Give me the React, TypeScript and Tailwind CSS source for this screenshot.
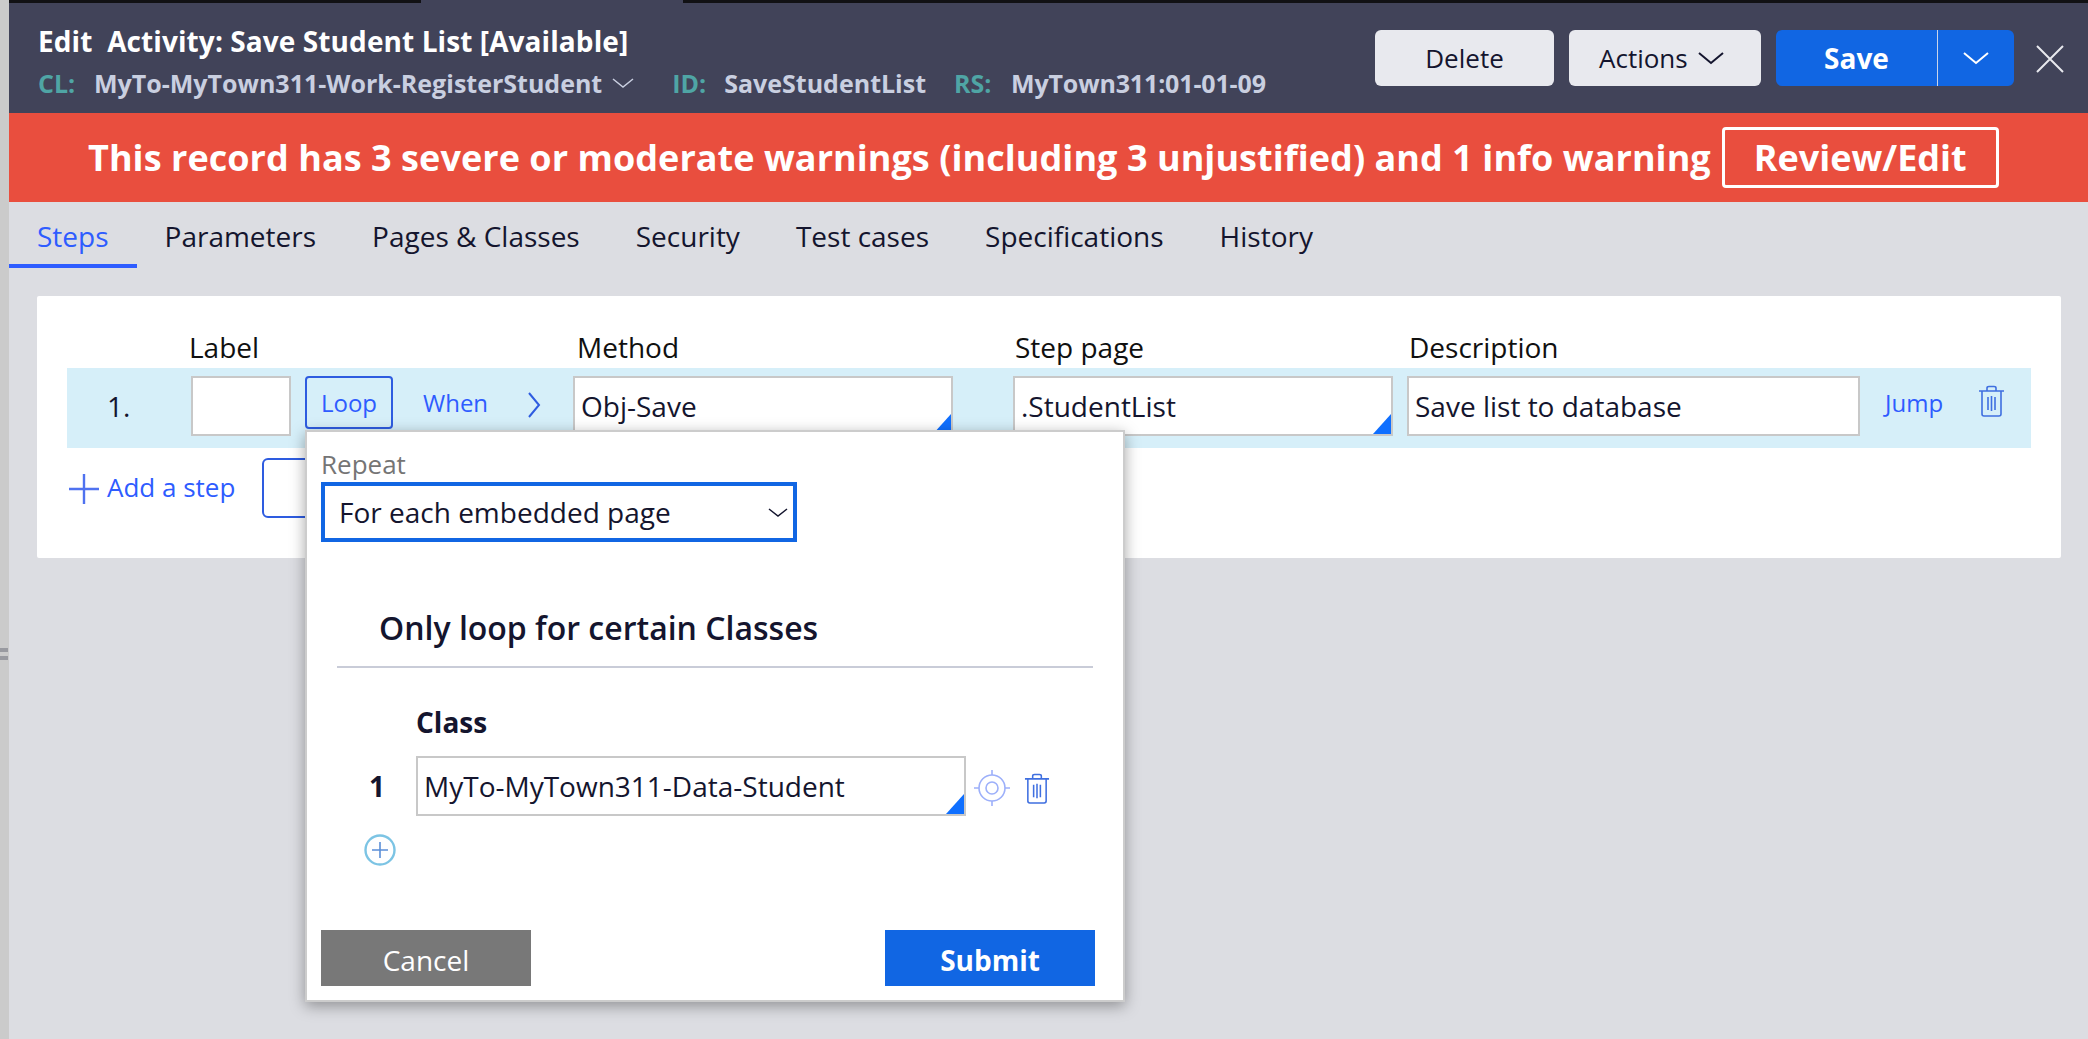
import React from "react";

const Chevron = ({ className, w = 24, h = 14, sw = 2 }: { className?: string; w?: number; h?: number; sw?: number }) => (
  <svg width={w} height={h} viewBox={`0 0 ${w} ${h}`} className={className} fill="none" stroke="currentColor" strokeWidth={sw}>
    <path d={`M1 2 L${w / 2} ${h - 2} L${w - 1} 2`} />
  </svg>
);

const Tri = () => (
  <svg width="18" height="20" viewBox="0 0 18 20" className="absolute right-0 bottom-0">
    <path d="M18 0 V20 H0 Z" fill="#0f6fff" />
  </svg>
);

const Trash = ({ w = 27, h = 32 }: { w?: number; h?: number }) => (
  <svg width={w} height={h} viewBox="0 0 27 32" fill="none" stroke="#3f6fe0" strokeWidth="1.6">
    <path d="M1 6 H26 M9 6 V3 Q9 1.5 11 1.5 H16 Q18 1.5 18 3 V6 M4 6 V29 Q4 31 6 31 H21 Q23 31 23 29 V6" />
    <path d="M10 12 V25 M13.5 11 V26 M17 12 V25" />
  </svg>
);

const Field = ({ className, children, tri = true }: { className?: string; children?: React.ReactNode; tri?: boolean }) => (
  <div className={`relative flex items-center h-[60px] border-2 border-[#c8c8c8] bg-white text-[#14152e] ${className ?? ""}`}>
    {children}
    {tri && <Tri />}
  </div>
);

export default function App() {
  const font = { fontFamily: '"Open Sans", "Noto Sans", sans-serif' };
  return (
    <div style={font} className="relative flex w-[2088px] h-[1039px] overflow-hidden bg-[#dcdde2] text-[#14152e]">
      <div className="w-[9px] shrink-0 bg-[#cbcbcb] flex flex-col gap-[4px] pt-[648px]">
        <div className="h-[4px] w-[8px] bg-[#999aa0]" />
        <div className="h-[4px] w-[8px] bg-[#999aa0]" />
      </div>
      <div className="flex-1 flex flex-col min-w-0">
        <div className="flex h-[3px] bg-[#111114]">
          <div className="w-[412px]" />
          <div className="w-[262px] bg-[#414359]" />
        </div>
        <header className="h-[110px] bg-[#414359] flex justify-between pl-[29px] pr-[24px]">
          <div className="flex flex-col pt-[21px]">
            <div className="text-[28px] leading-[34px] font-bold text-white whitespace-pre tracking-[0.09px]">Edit  Activity: Save Student List [Available]</div>
            <div className="flex items-center mt-[10px] text-[25px] leading-[30px] font-bold text-[#c9cfe0]">
              <span className="text-[#4fa5a5] w-[56px]">CL:</span>
              <span>MyTo-MyTown311-Work-RegisterStudent</span>
              <Chevron className="ml-[10px] text-[#c9cfe0]" w={22} h={12} sw={1.5} />
              <span className="text-[#4fa5a5] ml-[38px] w-[52px]">ID:</span>
              <span>SaveStudentList</span>
              <span className="text-[#4fa5a5] ml-[28px] w-[57px]">RS:</span>
              <span className="tracking-[-0.15px]">MyTown311:01-01-09</span>
            </div>
          </div>
          <div className="flex items-start gap-[15px] pt-[27px]">
            <button className="w-[179px] h-[56px] rounded-[6px] bg-[#e8e9ee] text-[26px] text-[#14152e]">Delete</button>
            <button className="w-[192px] h-[56px] rounded-[6px] bg-[#e8e9ee] text-[26px] text-[#14152e] flex items-center justify-start pl-[30px] gap-[10px]">
              Actions <Chevron w={26} h={14} />
            </button>
            <div className="w-[238px] h-[56px] rounded-[6px] bg-[#1166e3] flex text-white">
              <button className="w-[161px] text-[28px] font-bold">Save</button>
              <div className="w-[1px] bg-[#c9d4ea]" />
              <button className="flex-1 flex items-center justify-center"><Chevron w={26} h={14} /></button>
            </div>
            <svg width="28" height="28" viewBox="0 0 28 28" className="ml-[7px] mt-[15px] text-[#e8e9ee]" fill="none" stroke="currentColor" strokeWidth="2">
              <path d="M1 1 L27 27 M27 1 L1 27" />
            </svg>
          </div>
        </header>
        <div className="h-[89px] bg-[#e94e3e] flex items-center pl-[79px]">
          <span className="text-[36px] font-bold text-white whitespace-nowrap tracking-[0.05px]">This record has 3 severe or moderate warnings (including 3 unjustified) and 1 info warning</span>
          <button className="ml-[11px] w-[277px] h-[61px] border-[3px] border-white rounded-[4px] text-[36px] font-bold text-white">Review/Edit</button>
        </div>
        <nav className="flex h-[66px] text-[28px] text-[#14152e]">
          <div className="px-[28px] h-full flex items-center pt-[5px] border-b-[4px] border-[#2e5cff] text-[#2e5cff]">Steps</div>
          <div className="px-[28px] h-full flex items-center pt-[2px]">Parameters</div>
          <div className="px-[28px] h-full flex items-center pt-[2px]">Pages &amp; Classes</div>
          <div className="px-[28px] h-full flex items-center pt-[2px]">Security</div>
          <div className="px-[28px] h-full flex items-center pt-[2px]">Test cases</div>
          <div className="px-[28px] h-full flex items-center pt-[2px]">Specifications</div>
          <div className="px-[28px] h-full flex items-center pt-[2px]">History</div>
        </nav>
        <main className="ml-[28px] mr-[27px] mt-[28px] h-[262px] bg-white rounded-[2px] px-[30px] pt-[31px]">
          <div className="grid grid-cols-[122px_384px_440px_394px_1fr] h-[41px] text-[28px] text-[#101010] leading-[40px]">
            <div />
            <div>Label</div>
            <div className="pl-[4px]">Method</div>
            <div className="pl-[2px]">Step page</div>
            <div className="pl-[2px]">Description</div>
          </div>
          <div className="grid grid-cols-[124px_382px_440px_394px_1fr] h-[80px] bg-[#d6eff9] pt-[8px] text-[28px]">
            <div className="pl-[40px] pt-[9px]">1.</div>
            <div className="flex items-start">
              <Field tri={false} className="w-[100px]" />
              <button className="ml-[14px] w-[88px] h-[53px] border-2 border-[#2e5ce0] rounded-[4px] text-[24px] text-[#2e5cff] leading-none">Loop</button>
              <span className="ml-[30px] mt-[9px] text-[24px] text-[#2e5cff]">When</span>
              <svg width="14" height="28" viewBox="0 0 14 28" className="ml-[39px] mt-[15px]" fill="none" stroke="#2e5ce0" strokeWidth="2">
                <path d="M2 2 L12 14 L2 26" />
              </svg>
            </div>
            <div><Field className="w-[380px] pl-[6px]">Obj-Save</Field></div>
            <div><Field className="w-[380px] pl-[6px]">.StudentList</Field></div>
            <div className="flex items-start">
              <Field tri={false} className="w-[453px] pl-[6px]">Save list to database</Field>
              <span className="ml-[25px] mt-[9px] text-[24px] text-[#2e5cff]">Jump</span>
              <span className="ml-[35px] mt-[9px]"><Trash /></span>
            </div>
          </div>
          <div className="flex items-start pt-[10px]">
            <svg width="34" height="34" viewBox="0 0 34 34" className="mt-[14px]" fill="none" stroke="#4f72f0" strokeWidth="2.4">
              <path d="M17 2 V32 M2 17 H32" />
            </svg>
            <span className="ml-[6px] mt-[10px] text-[26px] text-[#2e5cff]">Add a step</span>
            <div className="ml-[27px] w-[120px] h-[60px] border-2 border-[#2e5ce0] rounded-[6px]" />
          </div>
        </main>
      </div>

      <section className="absolute left-[305px] top-[430px] w-[820px] h-[572px] bg-white border-2 border-[#cccccc] shadow-[0_4px_14px_rgba(0,0,0,0.35)] flex flex-col">
        <div className="pl-[14px] pt-[15px] text-[26px] leading-[34px] text-[#757575]">Repeat</div>
        <div className="ml-[14px] mt-[1px] w-[476px] h-[60px] border-[4px] border-[#1166e3] flex items-center justify-between pl-[14px] pr-[5px] text-[28px] text-[#14152e]">
          For each embedded page
          <Chevron w={20} h={11} sw={1.5} />
        </div>
        <div className="ml-[72px] mt-[64px] text-[32px] leading-[44px] font-semibold">Only loop for certain Classes</div>
        <div className="ml-[30px] mt-[16px] w-[756px] h-[2px] bg-[#c9ccd8]" />
        <div className="ml-[109px] mt-[35px] text-[28px] leading-[38px] font-bold">Class</div>
        <div className="flex items-center mt-[15px]">
          <span className="ml-[62px] w-[47px] text-[28px] font-bold">1</span>
          <Field className="w-[550px] pl-[6px] text-[28px]">MyTo-MyTown311-Data-Student</Field>
          <svg width="36" height="36" viewBox="0 0 36 36" className="ml-[8px] mb-[-4px]" fill="none" stroke="#9db0fa" strokeWidth="1.6">
            <circle cx="18" cy="18" r="13" />
            <circle cx="18" cy="18" r="6" />
            <path d="M18 0 V5 M18 31 V36 M0 18 H5 M31 18 H36" />
          </svg>
          <span className="ml-[14px] mt-[4px]"><Trash w={26} h={31} /></span>
        </div>
        <svg width="32" height="32" viewBox="0 0 32 32" className="ml-[57px] mt-[18px]" fill="none" stroke="#7cc4e4">
          <circle cx="16" cy="16" r="14.5" strokeWidth="2.4" />
          <path d="M16 8 V24 M8 16 H24" stroke="#5b8fd8" strokeWidth="1.6" />
        </svg>
        <div className="flex justify-between pl-[14px] pr-[28px] mt-[auto] mb-[14px]">
          <button className="w-[210px] h-[56px] bg-[#787878] text-white text-[28px] pt-[4px]">Cancel</button>
          <button className="w-[210px] h-[56px] bg-[#1166e3] text-white text-[28px] font-bold pt-[4px]">Submit</button>
        </div>
      </section>
    </div>
  );
}
